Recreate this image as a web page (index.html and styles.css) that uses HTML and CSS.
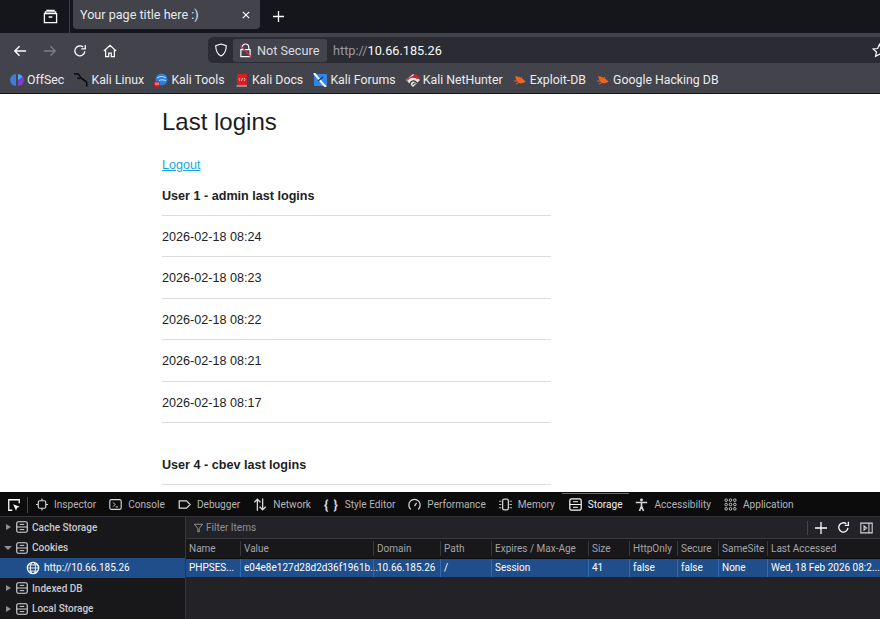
FILE: index.html
```html
<!DOCTYPE html>
<html lang="en">
<head>
<meta charset="utf-8">
<title>Your page title here :)</title>
<link rel="stylesheet" href="styles.css">
</head>
<body>
<div class="tabstrip">
  <svg class="ic-view" viewBox="0 0 16 16" width="15" height="15"><path d="M3.500 1.500h9M1.500 5h13v9.500h-13zM2.500 5V3h11v2M6 8.500h4" fill="none" stroke="#fbfbfe" stroke-width="1.400"/></svg>
  <div class="tabsep"></div>
  <div class="tab"><span class="tab-title">Your page title here :)</span><svg viewBox="0 0 10 10" width="8" height="8"><path d="M1 1l8 8M9 1l-8 8" stroke="#fbfbfe" stroke-width="1.500"/></svg></div>
  <svg class="ic-plus" viewBox="0 0 12 12" width="11" height="11"><path d="M6 0v12M0 6h12" stroke="#fbfbfe" stroke-width="1.400"/></svg>
</div>
<div class="navbar">
  <svg class="nav-ic" viewBox="0 0 16 16" width="14" height="14"><path d="M15 8H2M7.500 2.500L2 8l5.500 5.500" fill="none" stroke="#fbfbfe" stroke-width="1.600"/></svg>
  <svg class="nav-ic" viewBox="0 0 16 16" width="14" height="14"><path d="M1 8h13M8.500 2.500L14 8l-5.500 5.500" fill="none" stroke="#7d7f86" stroke-width="1.500"/></svg>
  <svg class="nav-ic" viewBox="0 0 16 16" width="14" height="14"><path d="M13.500 8.500A5.700 5.700 0 1 1 11.500 3.500M14 1v4.500H9.500" fill="none" stroke="#fbfbfe" stroke-width="1.500"/></svg>
  <svg class="nav-ic" viewBox="0 0 16 16" width="14" height="14"><path d="M1 8l7-6.500L15 8M3 6.500V14.500h3.500v-4h3v4H13V6.500" fill="none" stroke="#fbfbfe" stroke-width="1.400"/></svg>
  <div class="urlbar">
    <svg class="shield" viewBox="0 0 16 16" width="14" height="14"><path d="M8 1.200L14 3c0 6-1.500 9.500-6 11.800C3.500 12.500 2 9 2 3z" fill="none" stroke="#fbfbfe" stroke-width="1.300"/></svg>
    <div class="secure">
      <svg viewBox="0 0 14 16" width="13" height="15"><path d="M3.500 7V4.500a3.500 3.500 0 0 1 7 0V7M2 7h10v7.500H2z" fill="none" stroke="#fbfbfe" stroke-width="1.300"/><path d="M1 2l12 13" stroke="#e22850" stroke-width="1.400"/></svg>
      <span>Not Secure</span>
    </div>
    <span class="url"><span class="url-dim">http://</span>10.66.185.26</span>
    <svg class="star" viewBox="0 0 16 16" width="15" height="15"><path d="M8 1.500l2 4.400 4.800.5-3.600 3.200 1 4.700L8 12l-4.200 2.300 1-4.700L1.200 6.400 6 5.900z" fill="none" stroke="#fbfbfe" stroke-width="1.300"/></svg>
  </div>
</div>
<div class="bookmarks">
  <span class="bm"><svg viewBox="0 0 14 14" width="14" height="14"><path d="M6 1A6 6 0 0 0 6 13z" fill="#3b7fd6"/><path d="M8 1A6 6 0 0 1 8 13z" fill="#7a3fd0"/><path d="M8 1A6 6 0 0 1 12.500 4L8 7z" fill="#35b5e8"/></svg>OffSec</span>
  <span class="bm"><svg viewBox="0 0 14 14" width="14" height="14"><path d="M0 1c3-1 5 0 6 2.500 1 2 3.500 3 6.500 5.500M12.500 9c.5 1 .5 2 0 4.500M6.500 5.500c-1.500 0-2.500-.5-3.500-.5" fill="none" stroke="#0b0b0e" stroke-width="1.600"/></svg>Kali Linux</span>
  <span class="bm"><svg viewBox="0 0 14 14" width="14" height="14"><circle cx="7.500" cy="6.500" r="6" fill="#2a7ee0"/><path d="M3 5c3-2 6-2 9 0M5 7.500c2-1 5-1 7 .5" stroke="#d7ecff" stroke-width="1" fill="none"/><rect x="0" y="8" width="6" height="6" rx="3" fill="#e01b24"/><path d="M2 9.500v2.500M4 9.500v2.500" stroke="#fff" stroke-width=".8"/></svg>Kali Tools</span>
  <span class="bm"><svg viewBox="0 0 14 14" width="14" height="14"><path d="M2 1h10v11H2z" fill="#d5201f"/><path d="M2 12h10v2H3a1 1 0 0 1-1-2z" fill="#8c8f94"/><path d="M5 5L4 6.500 5 8M9 5l1 1.500L9 8M7.500 5l-1 3" stroke="#fff" stroke-width=".7" fill="none"/></svg>Kali Docs</span>
  <span class="bm"><svg viewBox="0 0 14 14" width="14" height="14"><rect x="1" y="1" width="13" height="12" rx="1" fill="#2f86e8"/><path d="M1 0l9 11 3 3" stroke="#f2f6fb" stroke-width="2" fill="none"/><path d="M5 8l5-4" stroke="#173a63" stroke-width="1.200"/></svg>Kali Forums</span>
  <span class="bm"><svg viewBox="0 0 14 14" width="14" height="14"><path d="M0 7l7-6 7 6-7 7z" fill="#e8e8e8"/><path d="M1.500 8.500c1-4 6-5 9.500-2.500l3-1-4-4-9 5z" fill="#d81f26"/><path d="M4 12c0-4.500 4.500-5.500 7-2M7 12c0-2 1.500-2.500 2.500-1.500" stroke="#333" stroke-width="1.100" fill="none"/></svg>Kali NetHunter</span>
  <span class="bm"><svg viewBox="0 0 14 14" width="14" height="14"><path d="M2 3l4 1c3 1 5 3 6.500 4.500-1.500 1.500-4 2-6 1.500C4 9.500 3 6 2 3z" fill="#f0641e"/><path d="M1 8l3 0M3 11l3-1.500M9 4L7 6" stroke="#f0641e" stroke-width="1"/></svg>Exploit-DB</span>
  <span class="bm"><svg viewBox="0 0 14 14" width="14" height="14"><path d="M2 3l4 1c3 1 5 3 6.500 4.500-1.500 1.500-4 2-6 1.500C4 9.500 3 6 2 3z" fill="#f0641e"/><path d="M1 8l3 0M3 11l3-1.500M9 4L7 6" stroke="#f0641e" stroke-width="1"/></svg>Google Hacking DB</span>
</div>
<main class="page">
  <div class="page-inner">
    <h1>Last logins</h1>
    <a class="logout" href="#">Logout</a>
    <section class="user">
      <h2>User 1 - admin last logins</h2>
      <div class="login">2026-02-18 08:24</div>
      <div class="login">2026-02-18 08:23</div>
      <div class="login">2026-02-18 08:22</div>
      <div class="login">2026-02-18 08:21</div>
      <div class="login">2026-02-18 08:17</div>
    </section>
    <section class="user">
      <h2>User 4 - cbev last logins</h2>
    </section>
  </div>
</main>
<div class="devtools">
  <div class="dt-tabs">
    <svg class="picker" viewBox="0 0 16 16" width="14" height="14"><path d="M6 14H2V2h12v4" fill="none" stroke="#fbfbfe" stroke-width="1.500"/><path d="M7 7l7.500 3-3 1.200-1.200 3.300z" fill="#fbfbfe"/></svg>
    <div class="dt-sep"></div>
    <span class="dt-tab"><svg viewBox="0 0 16 16" width="12" height="13"><rect x="3" y="3" width="10" height="10" rx="2" fill="none" stroke="#d7d7db" stroke-width="1.500"/><path d="M8 0v3M8 13v3M0 8h3M13 8h3" stroke="#d7d7db" stroke-width="1.500"/></svg>Inspector</span>
    <span class="dt-tab"><svg viewBox="0 0 16 16" width="13" height="13"><rect x="1" y="2" width="14" height="12" rx="2" fill="none" stroke="#d7d7db" stroke-width="1.400"/><path d="M5 5.500L7.500 8 5 10.500M8 11h3" stroke="#d7d7db" fill="none" stroke-width="1.200"/></svg>Console</span>
    <span class="dt-tab"><svg viewBox="0 0 16 16" width="13" height="13"><path d="M1.500 3.500h9L15 8l-4.500 4.500h-9z" fill="none" stroke="#d7d7db" stroke-width="1.500"/></svg>Debugger</span>
    <span class="dt-tab"><svg viewBox="0 0 16 16" width="14" height="15"><path d="M5 15V2M1.500 5.500L5 2l3.500 3.500M11 1v13M7.500 10.500L11 14l3.500-3.500" fill="none" stroke="#d7d7db" stroke-width="1.500"/></svg>Network</span>
    <span class="dt-tab"><span class="braces">{ }</span>Style Editor</span>
    <span class="dt-tab"><svg viewBox="0 0 16 16" width="13" height="13"><path d="M3.500 14A7 7 0 1 1 12.500 14M8 10l2.500-4" fill="none" stroke="#d7d7db" stroke-width="1.500"/></svg>Performance</span>
    <span class="dt-tab"><svg viewBox="0 0 16 16" width="13" height="13"><rect x="4.500" y="1.500" width="7" height="13" rx="2" fill="none" stroke="#d7d7db" stroke-width="1.500"/><path d="M0 4h3M0 8h3M0 12h3M13 4h3M13 8h3M13 12h3" stroke="#d7d7db"/></svg>Memory</span>
    <span class="dt-tab active"><svg class="dbicon" viewBox="0 0 16 16" width="13" height="13"><rect x="1" y="1" width="14" height="14" rx="2" fill="none" stroke="#fbfbfe" stroke-width="1.500"/><path d="M1 8h14M5 4.500h6M5 11.500h6" stroke="#fbfbfe" stroke-width="1.300"/></svg>Storage</span>
    <span class="dt-tab"><svg viewBox="0 0 16 16" width="13" height="15"><circle cx="8" cy="2.500" r="1.800" fill="#d7d7db"/><path d="M1 5.500h14M8 5v5M5.500 16L8 10l2.500 6" stroke="#d7d7db" stroke-width="2" fill="none"/></svg>Accessibility</span>
    <span class="dt-tab"><svg viewBox="0 0 15 15" width="13" height="13"><g fill="none" stroke="#d7d7db"><circle cx="2.500" cy="2.500" r="1.500"/><circle cx="7.500" cy="2.500" r="1.500"/><circle cx="12.500" cy="2.500" r="1.500"/><circle cx="2.500" cy="7.500" r="1.500"/><circle cx="7.500" cy="7.500" r="1.500"/><circle cx="12.500" cy="7.500" r="1.500"/><circle cx="2.500" cy="12.500" r="1.500"/><circle cx="7.500" cy="12.500" r="1.500"/><circle cx="12.500" cy="12.500" r="1.500"/></g></svg>Application</span>
  </div>
  <div class="dt-body">
    <aside class="tree">
      <div class="node"><i class="tri"></i><svg viewBox="0 0 16 16" width="12" height="12"><rect x="1" y="1" width="14" height="14" rx="2" fill="none" stroke="#d7d7db" stroke-width="1.500"/><path d="M1 8h14M5 4.500h6M5 11.500h6" stroke="#d7d7db" stroke-width="1.300"/></svg>Cache Storage</div>
      <div class="node"><i class="tri open"></i><svg viewBox="0 0 16 16" width="12" height="12"><rect x="1" y="1" width="14" height="14" rx="2" fill="none" stroke="#d7d7db" stroke-width="1.500"/><path d="M1 8h14M5 4.500h6M5 11.500h6" stroke="#d7d7db" stroke-width="1.300"/></svg>Cookies</div>
      <div class="node selected"><svg viewBox="0 0 16 16" width="14" height="14"><circle cx="8" cy="8" r="6.500" fill="none" stroke="#fff" stroke-width="1.400"/><ellipse cx="8" cy="8" rx="3" ry="6.500" fill="none" stroke="#fff"/><path d="M1.500 8h13M2.500 4.500h11M2.500 11.500h11" stroke="#fff"/></svg>http://10.66.185.26</div>
      <div class="node"><i class="tri"></i><svg viewBox="0 0 16 16" width="12" height="12"><rect x="1" y="1" width="14" height="14" rx="2" fill="none" stroke="#d7d7db" stroke-width="1.500"/><path d="M1 8h14M5 4.500h6M5 11.500h6" stroke="#d7d7db" stroke-width="1.300"/></svg>Indexed DB</div>
      <div class="node"><i class="tri"></i><svg viewBox="0 0 16 16" width="12" height="12"><rect x="1" y="1" width="14" height="14" rx="2" fill="none" stroke="#d7d7db" stroke-width="1.500"/><path d="M1 8h14M5 4.500h6M5 11.500h6" stroke="#d7d7db" stroke-width="1.300"/></svg>Local Storage</div>
    </aside>
    <div class="panel">
      <div class="filter">
        <svg viewBox="0 0 12 12" width="9" height="10"><path d="M.5 1h11L7 6.500V11H5V6.500z" fill="none" stroke="#b1b1b3"/></svg>
        <span class="filter-text">Filter Items</span>
        <div class="filter-sep"></div>
        <svg viewBox="0 0 12 12" width="12" height="12"><path d="M6 0v12M0 6h12" stroke="#fbfbfe" stroke-width="1.300"/></svg>
        <svg viewBox="0 0 16 16" width="13" height="13"><path d="M13.500 8.500A5.700 5.700 0 1 1 11.500 3.500M14 1v4.500H9.500" fill="none" stroke="#fbfbfe" stroke-width="1.600"/></svg>
        <svg viewBox="0 0 16 14" width="13" height="12"><path d="M1 1h14v12H1zM11 1v12M5 4.500L8 7l-3 2.500z" fill="none" stroke="#d7d7db" stroke-width="1.300"/></svg>
      </div>
      <div class="grid head">
        <span>Name</span><span>Value</span><span>Domain</span><span>Path</span><span>Expires / Max-Age</span><span>Size</span><span>HttpOnly</span><span>Secure</span><span>SameSite</span><span>Last Accessed</span>
      </div>
      <div class="grid row">
        <span>PHPSES...</span><span>e04e8e127d28d2d36f1961b...</span><span>10.66.185.26</span><span>/</span><span>Session</span><span>41</span><span>false</span><span>false</span><span>None</span><span>Wed, 18 Feb 2026 08:2...</span>
      </div>
    </div>
  </div>
</div>
</body>
</html>
```
FILE: styles.css
```css
* { box-sizing: border-box; }
html, body { margin: 0; height: 100%; overflow: hidden; }
body {
  width: 880px;
  height: 619px;
  display: flex;
  flex-direction: column;
  font-family: Roboto, sans-serif;
  background: #fff;
}
svg { flex: none; display: block; }

.tabstrip {
  height: 33px;
  flex: none;
  background: #15161b;
  display: flex;
  align-items: center;
  color: #fbfbfe;
}
.ic-view { margin: 0 0 0 43px; }
.tabsep { width: 1px; height: 33px; background: #3b3c42; margin-left: 11px; }
.tab {
  width: 187px;
  height: 29px;
  margin: 0 0 4px 3px;
  border-radius: 0 0 4px 4px;
  background: #42434b;
  display: flex;
  align-items: center;
  justify-content: space-between;
  padding: 0 10px 0 7px;
  font-size: 12.600px;
  color: #e8e8ea;
}
.ic-plus { margin-left: 13px; }

.navbar {
  height: 31px;
  flex: none;
  background: #42434b;
  display: flex;
  align-items: center;
  padding: 4px 0 0 13px;
  gap: 16px;
}
.urlbar {
  margin-left: 75px;
  flex: 1;
  height: 26px;
  margin-bottom: 1px;
  background: #2b2c33;
  border-radius: 5px 0 0 5px;
  display: flex;
  align-items: center;
  padding-left: 6px;
  color: #fbfbfe;
  font-size: 12.700px;
  white-space: nowrap;
}
.secure {
  margin-left: 5px;
  height: 23px;
  width: 94px;
  background: #42434b;
  border-radius: 3px;
  display: flex;
  align-items: center;
  gap: 5px;
  padding-left: 6px;
  color: #dcdce0;
}
.url { margin-left: 6px; }
.url-dim { color: #9a9ba1; }
.star { margin-left: auto; margin-right: -7px; }

.bookmarks {
  height: 30px;
  flex: none;
  background: #42434b;
  border-bottom: 1px solid #16171b;
  display: flex;
  align-items: center;
  padding: 3px 0 0 10px;
  gap: 10.200px;
  font-size: 12.300px;
  color: #ececef;
  white-space: nowrap;
}
.bm { display: flex; align-items: center; gap: 3px; }

.page {
  flex: 1;
  min-height: 0;
  overflow: hidden;
  background: #fff;
  padding-left: 162px;
  font-family: "Liberation Sans", Arial, sans-serif;
  color: #222;
}
.page-inner { width: 389px; }
h1 {
  margin: 11px 0 0;
  font-size: 24px;
  line-height: 34px;
  font-weight: 400;
  color: #1c1c1c;
}
.logout {
  display: block;
  margin-top: 15px;
  font-size: 12.600px;
  line-height: 22px;
  color: #1aa6dc;
}
.user { margin-bottom: 32px; }
h2 {
  margin: 10px 0 0;
  font-size: 12.600px;
  line-height: 20px;
  height: 30px;
  font-weight: 700;
  color: #222;
  border-bottom: 1px solid #ddd;
}
.login {
  height: 41.400px;
  font-size: 12.600px;
  line-height: 42px;
  border-bottom: 1px solid #ddd;
}

.devtools {
  height: 127px;
  flex: none;
  border-top: 1px solid #0c0c0d;
  background: #232327;
  font-size: 10px;
  color: #c5c5c9;
  display: flex;
  flex-direction: column;
}
.dt-tabs {
  height: 24px;
  flex: none;
  background: #0c0c0d;
  border-bottom: 1px solid #36363a;
  display: flex;
  align-items: center;
  padding-left: 7px;
  white-space: nowrap;
  font-size: 10.100px;
}
.picker { margin-right: 6px; }
.dt-sep { width: 1px; height: 16px; background: #44444a; margin-right: 8px; }
.dt-tab {
  display: flex;
  align-items: center;
  gap: 6px;
  height: 23px;
  margin-right: 13px;
  color: #b5b5b9;
}
.dt-tab.active {
  color: #f0f0f3;
  box-shadow: inset 0 1px 0 #0a84ff;
  padding: 0 7px;
  margin: 0 6px 0 -6px;
}
.braces { font-size: 13px; color: #d7d7db; font-weight: 700; letter-spacing: 1px; }

.dt-body { flex: 1; min-height: 0; display: flex; }
.tree {
  width: 186px;
  flex: none;
  background: #18181b;
  border-right: 1px solid #36363a;
  font-weight: 500;
  color: #c8c8cc;
}
.node {
  height: 20.400px;
  display: flex;
  align-items: center;
  gap: 4px;
  padding-left: 16px;
  position: relative;
}
.tri {
  position: absolute;
  left: 6px;
  top: 7px;
  border-left: 5px solid #8f8f94;
  border-top: 3px solid transparent;
  border-bottom: 3px solid transparent;
}
.tri.open {
  left: 4px;
  top: 9px;
  border-top: 4px solid #8f8f94;
  border-left: 4px solid transparent;
  border-right: 4px solid transparent;
  border-bottom: 0;
}
.node.selected {
  background: #204e8a;
  color: #fff;
  padding-left: 26px;
  font-weight: 400;
}

.panel { flex: 1; min-width: 0; display: flex; flex-direction: column; }
.filter {
  height: 22px;
  flex: none;
  border-bottom: 1px solid #38383d;
  display: flex;
  align-items: center;
  padding: 0 7px 0 8px;
  gap: 10px;
}
.filter-text { margin-left: -7px; color: #8f8f94; margin-right: auto; }
.filter-sep { width: 1px; height: 14px; background: #44444a; margin-right: -3px; }
.grid {
  display: grid;
  grid-template-columns: 54px 133px 67px 51px 97px 41px 48px 41px 49px 1fr;
  white-space: nowrap;
  align-items: center;
}
.grid > span { padding-left: 3px; }
.head {
  height: 20px;
  background: #18181b;
  border-bottom: 1px solid #0c0c0d;
  color: #a5a5a9;
}
.grid > span + span { border-left: 1px solid #38383d; }
.head > span { line-height: 15px; }
.row { height: 18px; background: #204e8a; color: #fff; }
.row > span { line-height: 18px; }
.row > span + span { border-left-color: #2f6bb3; }
```
